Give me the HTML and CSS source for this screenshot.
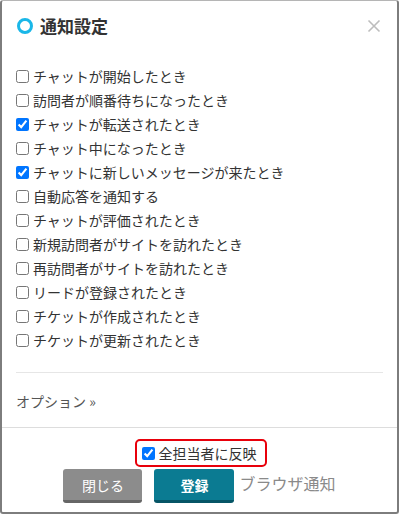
FILE: index.html
```html
<!DOCTYPE html>
<html lang="ja">
<head>
    <meta charset="UTF-8">
    <meta name="viewport" content="width=device-width, initial-scale=1.0">
    <title>通知設定</title>
    <link rel="stylesheet" href="styles.css">
</head>
<body>
    <div class="dialog">
        <div class="dialog-header">
            <span class="ring"></span>
            <h2>通知設定</h2>
            <button type="button" class="close" aria-label="閉じる">
                <svg width="14" height="14" viewBox="0 0 14 14">
                    <path d="M1.5 1.5 L12.5 12.5 M12.5 1.5 L1.5 12.5" stroke="#bdbdbd" stroke-width="1.6" fill="none"/>
                </svg>
            </button>
        </div>

        <div class="dialog-body">
            <ul class="events">
                <li><label><input type="checkbox">チャットが開始したとき</label></li>
                <li><label><input type="checkbox">訪問者が順番待ちになったとき</label></li>
                <li><label><input type="checkbox" checked>チャットが転送されたとき</label></li>
                <li><label><input type="checkbox">チャット中になったとき</label></li>
                <li><label><input type="checkbox" checked>チャットに新しいメッセージが来たとき</label></li>
                <li><label><input type="checkbox">自動応答を通知する</label></li>
                <li><label><input type="checkbox">チャットが評価されたとき</label></li>
                <li><label><input type="checkbox">新規訪問者がサイトを訪れたとき</label></li>
                <li><label><input type="checkbox">再訪問者がサイトを訪れたとき</label></li>
                <li><label><input type="checkbox">リードが登録されたとき</label></li>
                <li><label><input type="checkbox">チケットが作成されたとき</label></li>
                <li><label><input type="checkbox">チケットが更新されたとき</label></li>
            </ul>
            <hr>
            <a class="options" href="#">オプション &raquo;</a>
        </div>

        <div class="dialog-footer">
            <label class="apply-all"><input type="checkbox" checked>全担当者に反映</label>
            <div class="actions">
                <button type="button" class="btn btn-close">閉じる</button>
                <button type="button" class="btn btn-save">登録</button>
                <span class="browser-note">ブラウザ通知</span>
            </div>
        </div>
    </div>
</body>
</html>
```

FILE: styles.css
```css
* {
    box-sizing: border-box;
}

body {
    margin: 0;
    background: #ffffff;
    font-family: "Noto Sans CJK JP", "Noto Sans", sans-serif;
    color: #333333;
}

.dialog {
    width: 399px;
    height: 514px;
    border: 2px solid #7d7d7d;
    border-top: 1px solid #b5b5b5;
    border-radius: 3px;
    display: flex;
    flex-direction: column;
}

.dialog-header {
    height: 49px;
    flex-shrink: 0;
    display: flex;
    align-items: center;
    padding: 0 16px 0 15px;
}

.ring {
    width: 16px;
    height: 16px;
    border: 3px solid #1ab7e8;
    border-radius: 50%;
    margin-right: 7px;
}

.dialog-header h2 {
    margin: 0;
    font-size: 17px;
    font-weight: bold;
    color: #333333;
    line-height: 20px;
    flex: 1;
}

.close {
    border: none;
    background: none;
    padding: 0;
    width: 14px;
    height: 14px;
    margin-top: 1px;
    cursor: pointer;
}

.dialog-body {
    flex: 1;
    padding: 14px 14px 0 14px;
}

.events {
    list-style: none;
    margin: 0;
    padding: 0;
}

.events li {
    height: 24px;
    line-height: 24px;
    font-size: 14px;
    color: #333333;
}

.events label,
.apply-all {
    display: flex;
    align-items: center;
    white-space: nowrap;
}

.events input,
.apply-all input {
    width: 13px;
    height: 13px;
    margin: 0 4px 0 0;
}

.dialog-body hr {
    border: none;
    border-top: 1px solid #e6e6e6;
    margin: 20px 0 18px 0;
}

.options {
    display: block;
    font-size: 14px;
    line-height: 20px;
    color: #555555;
    text-decoration: none;
}

.dialog-footer {
    flex-shrink: 0;
    border-top: 1px solid #dddddd;
    padding: 11px 0 9px 0;
    display: flex;
    flex-direction: column;
    align-items: center;
}

.apply-all {
    height: 28px;
    padding: 0 8px 0 5px;
    border: 2.5px solid #e8000b;
    border-radius: 5px;
    font-size: 14px;
    color: #333333;
    margin-left: 2px;
}

.actions {
    margin-top: 2px;
    height: 34px;
    display: flex;
    align-items: center;
}

.btn {
    width: 79px;
    height: 34px;
    border: none;
    border-radius: 3px;
    font-family: inherit;
    font-size: 14px;
    color: #ffffff;
    padding: 0;
    cursor: pointer;
}

.btn-close {
    background: #8c8c8c;
    border-bottom: 3px solid #666666;
}

.btn-save {
    width: 80px;
    margin-left: 12px;
    background: #0b7b92;
    border-bottom: 3px solid #065566;
    font-weight: bold;
}

.browser-note {
    margin-left: 5px;
    margin-bottom: 6px;
    font-size: 16px;
    color: #8a8a8a;
    line-height: 24px;
}
```
